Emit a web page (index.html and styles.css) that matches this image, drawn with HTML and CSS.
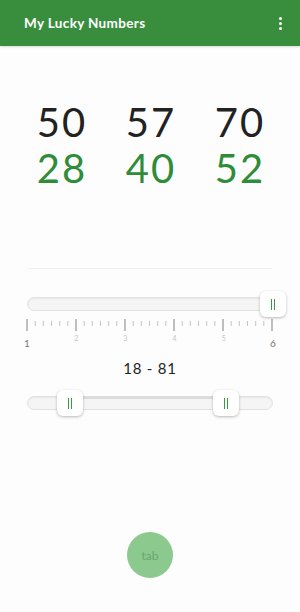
FILE: index.html
```html
<!DOCTYPE html>
<html>
<head>
<meta charset="utf-8">
<link rel="stylesheet" href="styles.css">
</head>
<body>
<div class="app">
  <header class="topbar">
    <span class="title">My Lucky Numbers</span>
    <span class="menu"><i></i><i></i><i></i></span>
  </header>
  <main class="content">
    <div class="numbers">
      <span class="num dark">50</span><span class="num dark">57</span><span class="num dark">70</span>
      <span class="num green">28</span><span class="num green">40</span><span class="num green">52</span>
    </div>
    <div class="divider"></div>
    <div class="slider single">
      <div class="track"></div>
      <div class="thumb" style="left:233px"><i></i><i></i></div>
    </div>
    <div class="scale">
      <svg class="ticks" width="248" height="14" viewBox="0 0 248 14">
        <g stroke="#a8a8a8" stroke-width="1">
          <line x1="1" y1="0" x2="1" y2="12" stroke-width="1.5"/>
          <line x1="50" y1="0" x2="50" y2="12" stroke-width="1.5"/>
          <line x1="99" y1="0" x2="99" y2="12" stroke-width="1.5"/>
          <line x1="148" y1="0" x2="148" y2="12" stroke-width="1.5"/>
          <line x1="197" y1="0" x2="197" y2="12" stroke-width="1.5"/>
          <line x1="246" y1="0" x2="246" y2="12" stroke-width="1.5"/>
        </g>
        <g stroke="#c4c4c4" stroke-width="1">
          <line x1="9.2" y1="2" x2="9.2" y2="7"/><line x1="17.3" y1="2" x2="17.3" y2="7"/><line x1="25.5" y1="2" x2="25.5" y2="7"/><line x1="33.7" y1="2" x2="33.7" y2="7"/><line x1="41.8" y1="2" x2="41.8" y2="7"/>
          <line x1="58.2" y1="2" x2="58.2" y2="7"/><line x1="66.3" y1="2" x2="66.3" y2="7"/><line x1="74.5" y1="2" x2="74.5" y2="7"/><line x1="82.7" y1="2" x2="82.7" y2="7"/><line x1="90.8" y1="2" x2="90.8" y2="7"/>
          <line x1="107.2" y1="2" x2="107.2" y2="7"/><line x1="115.3" y1="2" x2="115.3" y2="7"/><line x1="123.5" y1="2" x2="123.5" y2="7"/><line x1="131.7" y1="2" x2="131.7" y2="7"/><line x1="139.8" y1="2" x2="139.8" y2="7"/>
          <line x1="156.2" y1="2" x2="156.2" y2="7"/><line x1="164.3" y1="2" x2="164.3" y2="7"/><line x1="172.5" y1="2" x2="172.5" y2="7"/><line x1="180.7" y1="2" x2="180.7" y2="7"/><line x1="188.8" y1="2" x2="188.8" y2="7"/>
          <line x1="205.2" y1="2" x2="205.2" y2="7"/><line x1="213.3" y1="2" x2="213.3" y2="7"/><line x1="221.5" y1="2" x2="221.5" y2="7"/><line x1="229.7" y1="2" x2="229.7" y2="7"/><line x1="237.8" y1="2" x2="237.8" y2="7"/>
        </g>
      </svg>
      <div class="labels">
        <span class="lbl end">1</span>
        <span class="lbl">2</span>
        <span class="lbl">3</span>
        <span class="lbl">4</span>
        <span class="lbl">5</span>
        <span class="lbl end">6</span>
      </div>
    </div>
    <div class="range-text">18 - 81</div>
    <div class="slider range">
      <div class="track"><div class="fill" style="left:43px;width:156px"></div></div>
      <div class="thumb" style="left:30px"><i></i><i></i></div>
      <div class="thumb" style="left:186px"><i></i><i></i></div>
    </div>
  </main>
  <button class="fab">tab</button>
</div>
</body>
</html>
```
FILE: styles.css
```css
* { box-sizing: border-box; }
html, body { margin: 0; padding: 0; }
body {
  width: 300px;
  height: 612px;
  background: #fdfdfd;
  font-family: "Lato", "Open Sans", sans-serif;
  overflow: hidden;
}
.app { position: relative; height: 612px; }
.topbar {
  height: 46px;
  background: #398e3d;
  display: flex;
  align-items: center;
  justify-content: space-between;
  padding: 0 18px 0 24px;
  box-shadow: 0 1px 2px rgba(0,0,0,0.15);
}
.title {
  color: #fff;
  font-weight: 700;
  font-size: 13.5px;
  letter-spacing: 0.35px;
}
.menu {
  display: flex;
  flex-direction: column;
  gap: 2px;
  padding-top: 1px;
}
.menu i {
  display: block;
  width: 3px;
  height: 3px;
  border-radius: 50%;
  background: #fff;
}
.content {
  padding: 53px 0 0;
}
.numbers {
  display: grid;
  grid-template-columns: repeat(3, 89px);
  justify-content: center;
  text-align: center;
  margin-left: 2px;
}
.num {
  font-size: 40px;
  line-height: 46px;
  font-weight: 400;
  letter-spacing: 2px;
}
.dark { color: #222; }
.green { color: #2f8c38; }
.divider {
  margin: 77px 28px 0;
  height: 1px;
  background: #eeeeee;
}
.slider {
  position: relative;
  margin: 0 27px;
  height: 26px;
  display: flex;
  align-items: center;
}
.single { margin-top: 22px; }
.track {
  position: relative;
  width: 100%;
  height: 14px;
  border-radius: 7px;
  background: #f5f5f5;
  border: 1px solid #e2e2e2;
  box-shadow: inset 0 1px 2px rgba(0,0,0,0.06);
}
.fill {
  position: absolute;
  top: -1px;
  height: 3px;
  background: #dcdcdc;
}
.thumb {
  position: absolute;
  top: 0;
  width: 26px;
  height: 26px;
  border-radius: 6px;
  background: #fff;
  box-shadow: 0 1px 3px rgba(0,0,0,0.28);
  display: flex;
  justify-content: center;
  align-items: center;
  gap: 2px;
}
.thumb i {
  display: block;
  width: 1px;
  height: 11px;
  background: #3a9a44;
}
.scale {
  margin: 2px 26px 0;
  width: 248px;
}
.ticks { display: block; }
.labels {
  position: relative;
  display: flex;
  justify-content: space-between;
  height: 18px;
  margin-top: 0;
}
.lbl {
  width: 10px;
  margin: 0 -4px;
  text-align: center;
  font-size: 7px;
  color: #c4c4c4;
  line-height: 8px;
  margin-top: 1px;
}
.lbl.end {
  font-size: 10px;
  color: #777;
  line-height: 12px;
  margin-top: 4px;
}
.range-text {
  text-align: center;
  font-size: 15px;
  color: #222;
  margin-top: 7px;
  line-height: 20px;
  letter-spacing: 0.8px;
}
.range { margin-top: 12px; }
.fab {
  position: absolute;
  left: 127px;
  top: 532px;
  width: 46px;
  height: 46px;
  border-radius: 50%;
  border: none;
  background: #8bc98e;
  color: #6aa66e;
  font-family: "Lato", sans-serif;
  font-size: 12px;
  padding: 0;
}
```
